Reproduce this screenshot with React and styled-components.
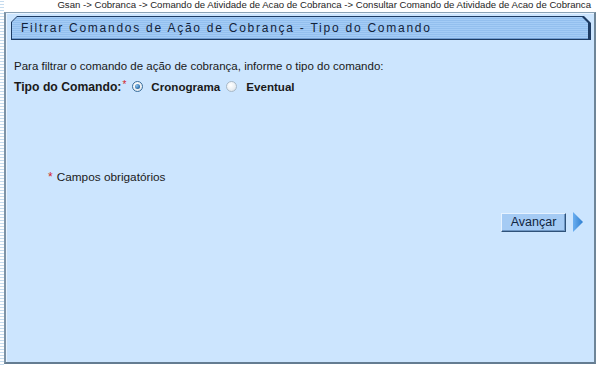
import React from "react";
import styled, { createGlobalStyle } from "styled-components";

const Global = createGlobalStyle`
  html, body { margin: 0; padding: 0; background: #ffffff; }
  body { font-family: "Liberation Sans", Arial, sans-serif; color: #1a1a1a; }
  #root { width: 597px; height: 365px; overflow: hidden; }
`;

const Page = styled.div`
  display: flex;
  width: 597px;
  height: 365px;
`;

const SideStripe = styled.div`
  width: 4px;
  flex: none;
  background: repeating-linear-gradient(
    to bottom,
    #ffffff 0px,
    #ffffff 1px,
    #c6dcef 1px,
    #c6dcef 2px,
    #ffffff 2px,
    #ffffff 3px
  );
`;

const Main = styled.div`
  flex: 1;
  display: flex;
  flex-direction: column;
  padding-right: 1px;
`;

const Breadcrumb = styled.div`
  height: 12px;
  font-size: 9.6px;
  line-height: 10px;
  text-align: right;
  padding-right: 5px;
  color: #1e1e1e;
  white-space: nowrap;
`;

const Panel = styled.div`
  height: 352px;
  box-sizing: border-box;
  background: #cce5fe;
  border: 1px solid #8aa2b6;
  border-left: 2px solid #7d93a6;
  border-right: 2px solid #6e8598;
  border-bottom: 2px solid #647c91;
  box-shadow: inset 1px 1px 0 #e8f3ff;
  padding: 3px 3px 0 5px;
  display: flex;
  flex-direction: column;
`;

const TitleOuter = styled.div`
  height: 24px;
  background: #1d3b63;
  clip-path: polygon(6px 0, calc(100% - 7px) 0, 100% 7px, 100% 100%, 0 100%, 0 6px);
  padding: 1px 3px 1px 1px;
  box-sizing: border-box;
`;

const TitleInner = styled.div`
  height: 100%;
  clip-path: polygon(5px 0, calc(100% - 6px) 0, 100% 6px, 100% 100%, 0 100%, 0 5px);
  background: repeating-linear-gradient(
    to bottom,
    #a4ccf6 0px,
    #a4ccf6 1px,
    #93bfee 1px,
    #93bfee 2px
  );
  border-bottom: 1px solid #6f9bd0;
  box-sizing: border-box;
  display: flex;
  align-items: center;
  padding-left: 9px;
  font-size: 12px;
  letter-spacing: 1.75px;
  color: #13233a;
  white-space: nowrap;
`;

const Body = styled.div`
  padding: 15px 0 0 3px;
  display: flex;
  flex-direction: column;
  font-size: 11.5px;
`;

const Line = styled.div`
  height: 21px;
  display: flex;
  align-items: center;
  white-space: nowrap;
`;

const Label = styled.span`
  font-weight: bold;
  font-size: 12.2px;
`;

const Req = styled.span`
  color: #d4241e;
  font-size: 10px;
  align-self: flex-start;
  margin-top: 3px;
  margin-left: 1px;
  font-weight: normal;
`;

const Radio = styled.span`
  width: 11px;
  height: 11px;
  border-radius: 50%;
  box-sizing: border-box;
  border: 1px solid ${(p) => (p.$checked ? "#3a6e9c" : "#a9b9c7")};
  background: radial-gradient(circle at 40% 35%, #ffffff 0%, #e9eef2 60%, #cfd8df 100%);
  margin: 0 ${(p) => p.$mr}px 0 ${(p) => p.$ml}px;
  display: inline-flex;
  align-items: center;
  justify-content: center;
  flex: none;
  &::after {
    content: "";
    display: ${(p) => (p.$checked ? "block" : "none")};
    width: 5px;
    height: 5px;
    border-radius: 50%;
    background: radial-gradient(circle at 35% 35%, #8cc4f0 0%, #2b6aa5 70%, #1b4f80 100%);
  }
`;

const Option = styled.span`
  font-weight: bold;
  font-size: 11.6px;
`;

const Note = styled.div`
  margin: 73px 0 0 34px;
  height: 14px;
  display: flex;
  align-items: center;
  font-size: 11.8px;
`;

const NoteStar = styled.span`
  color: #d4241e;
  margin-right: 4px;
  font-size: 12px;
`;

const Actions = styled.div`
  margin-top: 28px;
  display: flex;
  justify-content: flex-end;
  align-items: center;
  padding-right: 8px;
  gap: 7px;
`;

const Button = styled.button`
  width: 65px;
  height: 19px;
  box-sizing: border-box;
  background: #a5cbf4;
  border: 1px solid;
  border-color: #e6f2ff #2f5279 #2f5279 #e6f2ff;
  box-shadow: inset -1px -1px 0 #6f97c4;
  font-family: "Liberation Sans", Arial, sans-serif;
  font-size: 12.5px;
  color: #10253f;
  padding: 0;
  line-height: 16px;
`;

const Arrow = () => (
  <svg width="10" height="20" viewBox="0 0 10 20">
    <defs>
      <linearGradient id="ag" x1="0" y1="0" x2="1" y2="0">
        <stop offset="0" stopColor="#6aaef0" />
        <stop offset="1" stopColor="#2f7fd0" />
      </linearGradient>
    </defs>
    <polygon points="0,0 10,10 0,20" fill="url(#ag)" />
  </svg>
);

export default function App() {
  return (
    <>
      <Global />
      <Page>
        <SideStripe />
        <Main>
          <Breadcrumb>
            Gsan -&gt; Cobranca -&gt; Comando de Atividade de Acao de Cobranca -&gt; Consultar Comando de Atividade de Acao de Cobranca
          </Breadcrumb>
          <Panel>
            <TitleOuter>
              <TitleInner>Filtrar Comandos de Ação de Cobrança - Tipo do Comando</TitleInner>
            </TitleOuter>
            <Body>
              <Line>Para filtrar o comando de ação de cobrança, informe o tipo do comando:</Line>
              <Line>
                <Label>Tipo do Comando:</Label>
                <Req>*</Req>
                <Radio $checked $ml={6} $mr={8} />
                <Option>Cronograma</Option>
                <Radio $ml={6} $mr={9} />
                <Option>Eventual</Option>
              </Line>
              <Note>
                <NoteStar>*</NoteStar>Campos obrigatórios
              </Note>
              <Actions>
                <Button>Avançar</Button>
                <Arrow />
              </Actions>
            </Body>
          </Panel>
        </Main>
      </Page>
    </>
  );
}
